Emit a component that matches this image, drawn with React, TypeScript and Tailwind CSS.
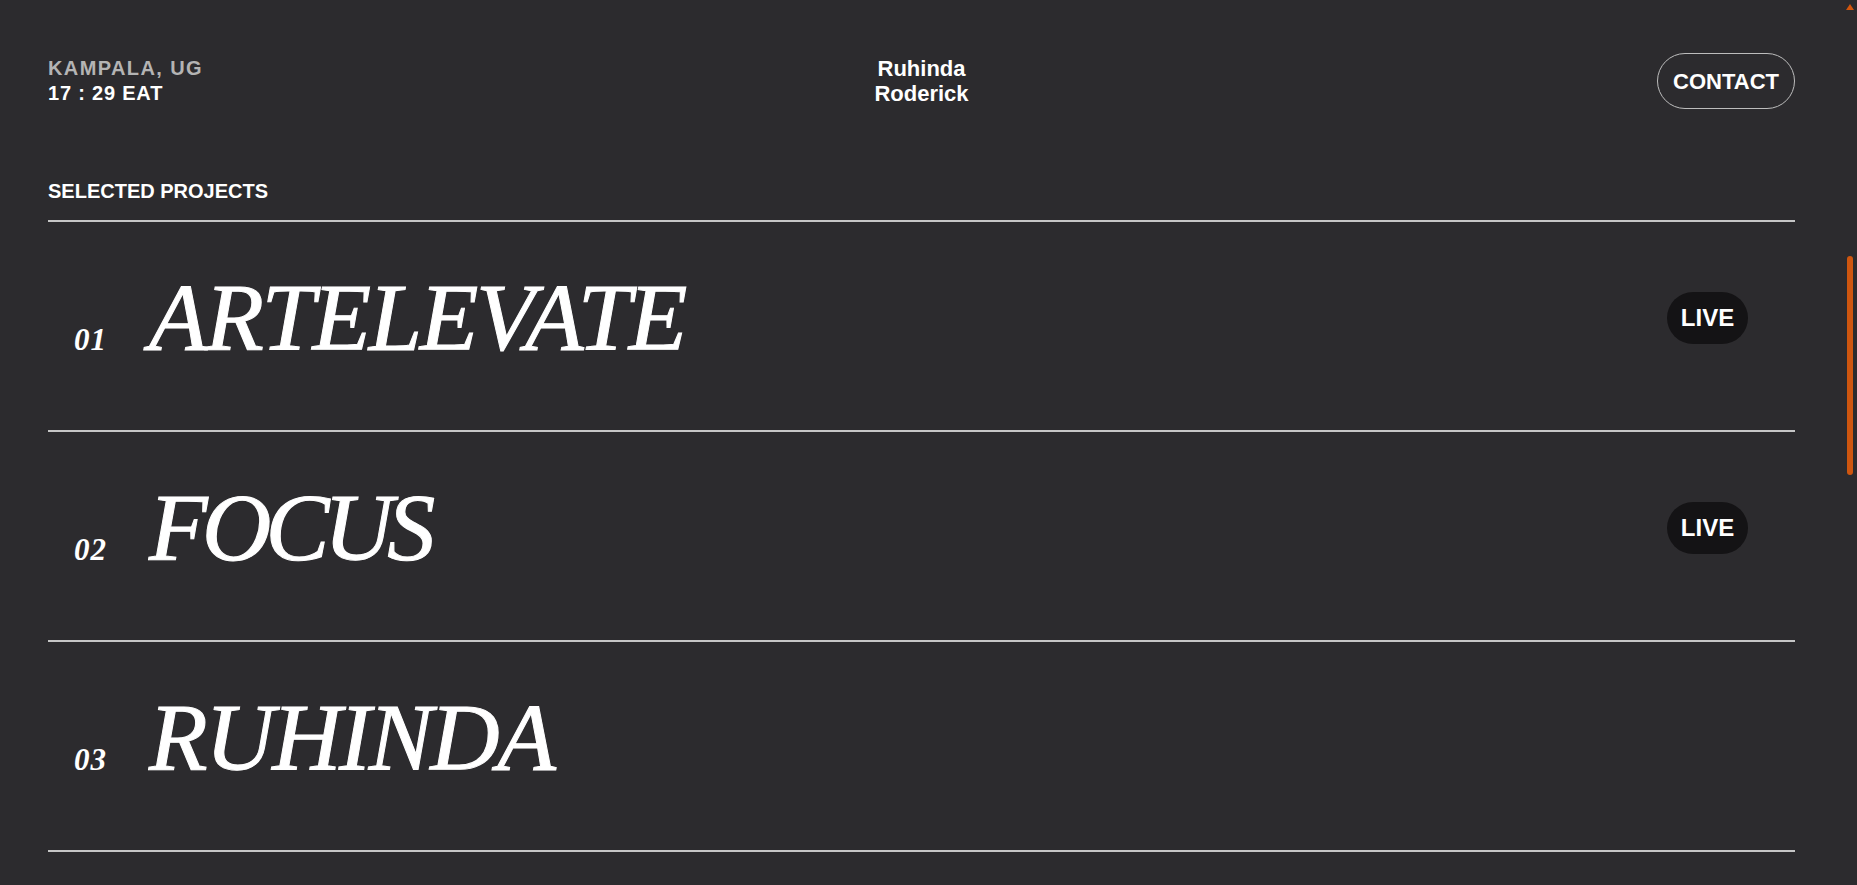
import { useEffect, useState } from "react";

interface Project {
  index: string;
  title: string;
  live?: boolean;
  tight?: boolean;
}

const projects: Project[] = [
  { index: "01", title: "ARTELEVATE", live: true },
  { index: "02", title: "FOCUS", live: true, tight: true },
  { index: "03", title: "RUHINDA" },
];

const sans = "font-['Liberation_Sans',Arial,sans-serif]";
const serif = "font-['Liberation_Serif','Times_New_Roman',serif]";

function ProjectRow({ project }: { project: Project }) {
  return (
    <li className="flex items-center justify-between border-b-2 border-[#c6c6c6] pt-[48px] pb-[64px]">
      <div className={`flex h-[96px] items-baseline pl-[26px] ${serif} italic`}>
        <span className="w-[75px] text-[31px] font-bold leading-none tracking-[0.03em]">
          {project.index}
        </span>
        <h3
          className={`text-[96px] font-normal leading-none [-webkit-text-stroke:1px_#ffffff] ${
            project.tight ? "tracking-[-0.06em]" : "tracking-[-0.025em]"
          }`}
        >
          {project.title}
        </h3>
      </div>
      {project.live && (
        <span
          className={`mr-[47px] flex h-[52px] w-[81px] items-center justify-center rounded-full bg-[#141315] text-[24px] font-bold ${sans}`}
        >
          LIVE
        </span>
      )}
    </li>
  );
}

function ScrollRail() {
  return (
    <aside className="flex w-[14px] shrink-0 flex-col items-center">
      <svg className="mt-[4px]" width="8" height="6" viewBox="0 0 8 6">
        <path d="M4 0L8 6H0z" fill="#d2560d" />
      </svg>
      <div className="mt-[246px] h-[219px] w-[6px] rounded-full bg-[#cf560f]" />
    </aside>
  );
}

export default function App() {
  const [time, setTime] = useState("17 : 29");

  useEffect(() => {
    // keep the static time so the picture stays stable
    setTime("17 : 29");
  }, []);

  return (
    <div className={`flex h-screen overflow-hidden bg-[#2c2b2e] text-white ${sans}`}>
      <main className="min-w-0 flex-1">
        <header className="flex items-center justify-between px-12 pt-[53px]">
          <div className="w-[220px] text-[20px] font-bold leading-[25px]">
            <p className="tracking-[0.07em] text-[#b4b4b4]">KAMPALA, UG</p>
            <p className="tracking-[0.04em]">{time} EAT</p>
          </div>
          <div className="text-center text-[22px] font-bold leading-[25px]">
            <p>Ruhinda</p>
            <p>Roderick</p>
          </div>
          <div className="flex w-[220px] justify-end">
            <a
              href="#contact"
              className="flex h-[56px] items-center rounded-full border border-[#bdbdbd] px-[15px] text-[22px] font-bold"
            >
              CONTACT
            </a>
          </div>
        </header>

        <section className="px-12 pt-[70px]">
          <h2 className="pb-[17px] text-[20px] font-bold leading-[24px]">SELECTED PROJECTS</h2>
          <ul className="border-t-2 border-[#c6c6c6]">
            {projects.map((p) => (
              <ProjectRow key={p.index} project={p} />
            ))}
          </ul>
        </section>
      </main>
      <ScrollRail />
    </div>
  );
}
